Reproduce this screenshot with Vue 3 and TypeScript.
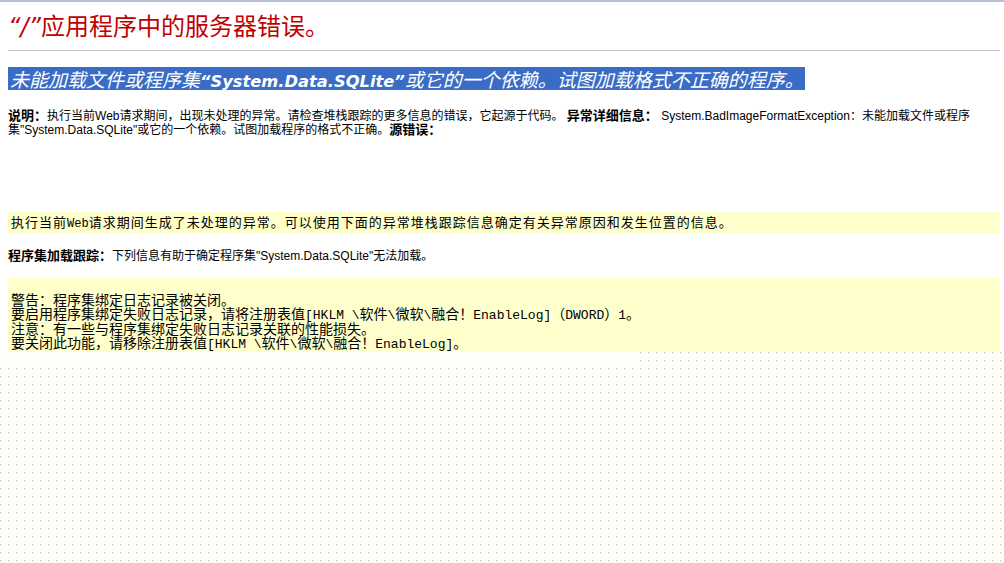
<script setup lang="ts">
const title = "应用程序中的服务器错误。";
</script>

<template>
  <div class="page">
    <main class="content">
      <h1 class="title"><span class="quote">“/”</span>{{ title }}</h1>
      <hr class="rule" />
      <h2 class="banner"><span>未能加载文件或程序集</span><b class="banner-name">“System.Data.SQLite”</b><span>或它的一个依赖。试图加载格式不正确的程序。</span></h2>
      <p class="desc">
        <b>说明：</b>执行当前Web请求期间，出现未处理的异常。请检查堆栈跟踪的更多信息的错误，它起源于代码。 <b>异常详细信息：</b> System.BadImageFormatException：未能加载文件或程序<br />集"System.Data.SQLite"或它的一个依赖。试图加载程序的格式不正确。<b>源错误：</b>
      </p>
      <div class="note">执行当前<span class="web">Web</span>请求期间生成了未处理的异常。可以使用下面的异常堆栈跟踪信息确定有关异常原因和发生位置的信息。</div>
      <p class="trace"><b>程序集加载跟踪：</b>下列信息有助于确定程序集"System.Data.SQLite"无法加载。</p>
      <pre class="log">警告：程序集绑定日志记录被关闭。
要启用程序集绑定失败日志记录，请将注册表值<span class="mono">[HKLM \</span>软件<span class="mono">\</span>微软<span class="mono">\</span>融合！<span class="mono">EnableLog]</span>（<span class="mono">DWORD</span>）<span class="mono">1</span>。
注意：有一些与程序集绑定失败日志记录关联的性能损失。
要关闭此功能，请移除注册表值<span class="mono">[HKLM \</span>软件<span class="mono">\</span>微软<span class="mono">\</span>融合！<span class="mono">EnableLog]</span>。</pre>
    </main>
    <div class="dotted">
      <div class="patch"></div>
    </div>
  </div>
</template>

<style>
html, body { margin: 0; background: #fff; }
</style>

<style scoped>
.page {
  width: 1004px;
  height: 563px;
  overflow: hidden;
  display: flex;
  flex-direction: column;
  font-family: "Liberation Sans", "Noto Sans CJK SC", sans-serif;
  color: #000;
}
.content {
  height: 350px;
  flex: none;
  background: #fff;
  border-top: 2px solid #b4c0d4;
  padding: 0 4px 0 8px;
}
.title {
  margin: 0;
  padding-top: 7px;
  height: 33px;
  font-family: "Noto Sans CJK SC", sans-serif;
  font-size: 24px;
  line-height: 32px;
  font-weight: 400;
  color: #c00000;
  white-space: nowrap;
}
.quote {
  font-family: "DejaVu Sans", sans-serif;
  font-style: italic;
  font-size: 24px;
}
.rule {
  margin: 8px 0 0;
  border: 0;
  height: 1px;
  background: #c2c6cc;
}
.banner {
  margin: 16px 0 0;
  width: 797px;
  height: 23px;
  box-sizing: border-box;
  padding-left: 2px;
  background: #3a6cc6;
  color: #fff;
  font-size: 19px;
  line-height: 23px;
  font-weight: 400;
  font-style: italic;
  white-space: nowrap;
  font-family: "Noto Sans CJK SC", sans-serif;
}
.banner-name {
  font-family: "DejaVu Sans", sans-serif;
  font-weight: 700;
  font-size: 16.3px;
}
.desc {
  margin: 19px 0 0;
  font-size: 12px;
  line-height: 14px;
  white-space: nowrap;
}
.desc b, .trace b {
  font-weight: 700;
  font-size: 13px;
  line-height: 0;
}
.note {
  margin-top: 75px;
  height: 21px;
  width: 992px;
  background: #ffffcc;
  padding-left: 3px;
  box-sizing: border-box;
  font-size: 13px;
  line-height: 20px;
  letter-spacing: 1px;
  white-space: nowrap;
  font-family: "Noto Sans CJK SC", sans-serif;
}
.web {
  font-size: 12px;
  letter-spacing: 0;
  font-family: "Liberation Mono", monospace;
  line-height: 0;
}
.trace {
  margin: 16px 0 0;
  font-size: 12px;
  line-height: 14px;
  white-space: nowrap;
}
.log {
  margin: 15px 0 0;
  width: 992px;
  height: 74px;
  box-sizing: border-box;
  background: #ffffcc;
  padding: 14px 0 0 3px;
  font-family: "Noto Sans CJK SC", sans-serif;
  font-size: 14px;
  line-height: 14.4px;
  white-space: pre;
}
.mono {
  font-family: "Liberation Mono", monospace;
  font-size: 13px;
  line-height: 0;
}
.dotted {
  flex: 1;
  background-color: #fffffa;
  background-image:
    radial-gradient(circle at 0.5px 0.5px, #b8b8b0 0.6px, transparent 0.7px),
    radial-gradient(circle at 1.5px 1.5px, #e2e2da 0.6px, transparent 0.7px);
  background-size: 8px 8px;
  background-position: 0 0;
}
.patch {
  width: 640px;
  height: 14px;
  background: #fffffa;
}
</style>
